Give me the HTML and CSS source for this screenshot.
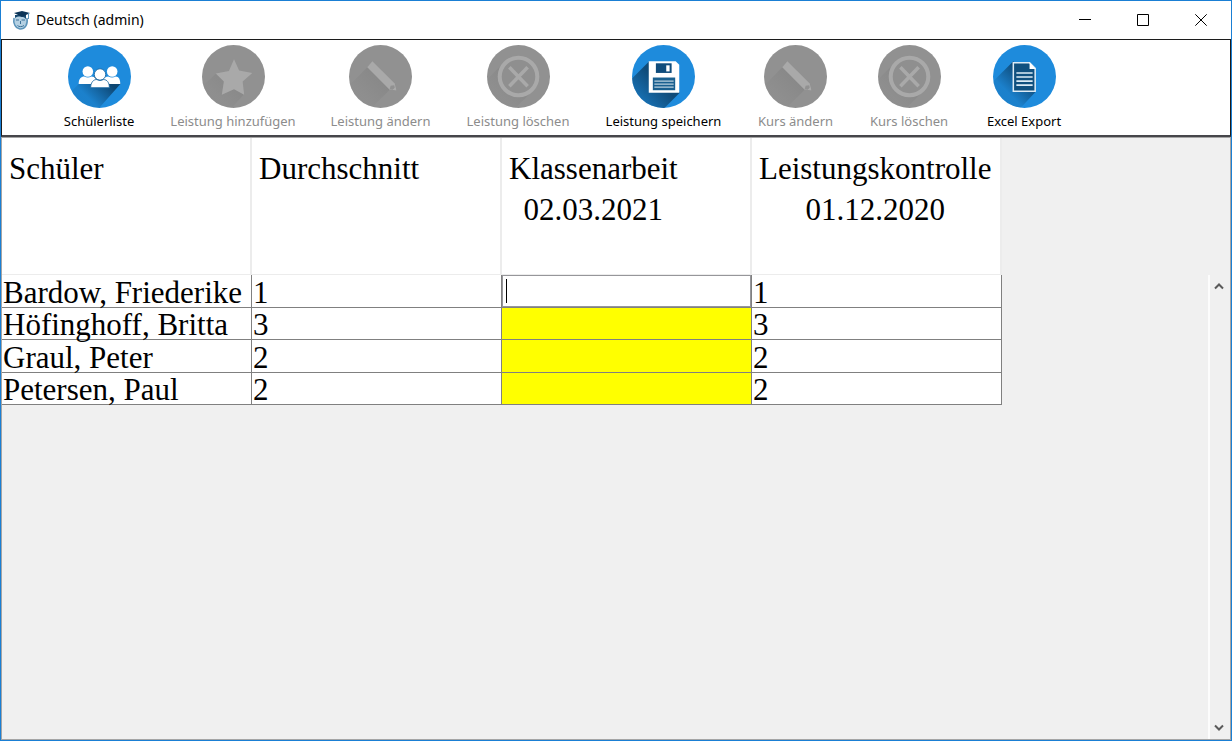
FILE: index.html
```
<!DOCTYPE html>
<html lang="de">
<head>
  <meta charset="UTF-8">
  <meta name="viewport" content="width=device-width, initial-scale=1.0">
  <title>Deutsch (admin)</title>
  <link rel="stylesheet" href="styles.css">
</head>
<body>
  <!-- shared icon parts -->
  <svg class="defs" width="0" height="0" aria-hidden="true">
    <defs>
      <clipPath id="disc"><circle cx="31" cy="31" r="31"/></clipPath>
      <linearGradient id="shade" gradientUnits="userSpaceOnUse" x1="36" y1="32" x2="18" y2="50">
        <stop offset="0" stop-color="#0d4672"/>
        <stop offset="1" stop-color="#0d4672" stop-opacity="0.15"/>
      </linearGradient>
      <linearGradient id="shadeDeep" gradientUnits="userSpaceOnUse" x1="26" y1="36" x2="6" y2="56">
        <stop offset="0" stop-color="#0f4b79"/>
        <stop offset="1" stop-color="#0f4b79" stop-opacity="0.35"/>
      </linearGradient>
      <linearGradient id="shadeGrey" gradientUnits="userSpaceOnUse" x1="40" y1="24" x2="14" y2="50">
        <stop offset="0" stop-color="#858585"/>
        <stop offset="1" stop-color="#858585" stop-opacity="0.2"/>
      </linearGradient>
      <symbol id="pencil" viewBox="0 0 62 62">
        <circle cx="31" cy="31" r="31" fill="#919191"/>
        <path d="M18 22L-12 52L10 74L45 39Z" fill="url(#shadeGrey)" clip-path="url(#disc)"/>
        <path d="M23 16L45 38L46.500 44.500L40 44L18 22Z" fill="#a9a9a9"/>
        <path d="M40 43.500L41 40L44.500 39.500L45 42L43 44Z" fill="#919191"/>
        <path d="M43 44L46 41.500L46.500 44.500Z" fill="#a9a9a9"/>
      </symbol>
      <symbol id="delete" viewBox="0 0 62 62">
        <circle cx="31" cy="31" r="31" fill="#919191"/>
        <path d="M17 17L-14 48L14 76L45 45Z" fill="url(#shadeGrey)" clip-path="url(#disc)"/>
        <circle cx="31" cy="31" r="18.500" fill="#8f8f8f" stroke="#a9a9a9" stroke-width="4"/>
        <path d="M22 22L40 40.500M40 22L22 40.500" stroke="#a9a9a9" stroke-width="3.500" fill="none"/>
      </symbol>
    </defs>
  </svg>

  <div class="window">
    <header class="titlebar">
      <svg class="app-icon" viewBox="0 0 18 20" aria-hidden="true">
        <circle cx="8.500" cy="11.500" r="7" fill="#b4d0e2"/>
        <path d="M2 8C1 13 3 18 8 19C13 19 16 15 15 8" fill="none" stroke="#5b93b9" stroke-width="1.500"/>
        <path d="M4 10H7M9.500 10H13M8.500 11V14M5.500 15.500C7 17 10 17 12 15.500" fill="none" stroke="#3c7198" stroke-width="1"/>
        <path d="M3 5V8C6 6 11 6 14 9V5Z" fill="#16486f"/>
        <path d="M2 3L10 1L18 3L10 7Z" fill="#0d3558"/>
        <path d="M16.500 3V9" stroke="#5b93b9"/>
      </svg>
      <h1>Deutsch (admin)</h1>
      <div class="window-controls">
        <button type="button" aria-label="Minimieren"><svg viewBox="0 0 12 12"><path d="M0 5.500H12"/></svg></button>
        <button type="button" aria-label="Maximieren"><svg viewBox="0 0 12 12"><path d="M.5 .5H11.500V11.500H.5Z"/></svg></button>
        <button type="button" aria-label="Schließen"><svg viewBox="0 0 12 12"><path d="M.3 .3L11.700 11.700M11.700 .3L.3 11.700"/></svg></button>
      </div>
    </header>

    <nav class="toolbar">
      <button type="button" class="tool">
        <svg viewBox="0 0 62 62">
          <circle cx="31" cy="31" r="31" fill="#1e8bdc"/>
          <path d="M11 38L-14 63L20 74L52 38L40 38L28 30Z" fill="url(#shade)" clip-path="url(#disc)"/>
          <g fill="#fff">
            <circle cx="19.500" cy="26" r="5.200"/>
            <circle cx="43.500" cy="26" r="5.200"/>
            <path d="M10.500 38.500C10.500 33 13 31 16 31Q19.500 33 23 31C27 31 28 34 28 38.500Z"/>
            <path d="M34 38.500C34 34 36 31 39.500 31Q43.500 33 47 31C50 31 51.500 34 51.500 38.500Z"/>
            <g stroke="#15649f" stroke-width=".8">
              <circle cx="31.500" cy="29" r="5.600"/>
              <path d="M22.300 42C22.300 37 25 34 28 34Q31.500 36 35 34C38.500 34 40.700 37 40.700 42Z"/>
            </g>
          </g>
        </svg>
        <span>Schülerliste</span>
      </button>
      <button type="button" class="tool" disabled>
        <svg viewBox="0 0 62 62">
          <circle cx="31" cy="31" r="31" fill="#919191"/>
          <path d="M14 28L-12 52L16 76L41 49Z" fill="url(#shadeGrey)" clip-path="url(#disc)"/>
          <path d="M31.500 14L36.500 25L49.500 27.500L40 36L41.500 49L31.500 43.500L19.500 49L21.500 36L13.500 28L26.500 25.500Z" fill="#a9a9a9"/>
        </svg>
        <span>Leistung hinzufügen</span>
      </button>
      <button type="button" class="tool" disabled>
        <svg><use href="#pencil"/></svg>
        <span>Leistung ändern</span>
      </button>
      <button type="button" class="tool" disabled>
        <svg><use href="#delete"/></svg>
        <span>Leistung löschen</span>
      </button>
      <button type="button" class="tool">
        <svg viewBox="0 0 62 62">
          <circle cx="31" cy="31" r="31" fill="#1e8bdc"/>
          <path d="M17 16L-14 47L16 78L47 47Z" fill="url(#shadeDeep)" clip-path="url(#disc)"/>
          <path d="M16.500 16H43L46.500 19.500V47H16.500Z" fill="#fff"/>
          <path d="M23.500 18H39V27.500H23.500Z" fill="#0f4c7c"/>
          <path d="M33.700 20H37V26H33.700Z" fill="#fff"/>
          <path d="M20.500 32H42.500V44.500H20.500Z" fill="#1a608f"/>
          <path d="M22 35.500H41M22 38.500H41M22 41.500H41" stroke="#b9cfde" stroke-width="1.300"/>
        </svg>
        <span>Leistung speichern</span>
      </button>
      <button type="button" class="tool" disabled>
        <svg><use href="#pencil"/></svg>
        <span>Kurs ändern</span>
      </button>
      <button type="button" class="tool" disabled>
        <svg><use href="#delete"/></svg>
        <span>Kurs löschen</span>
      </button>
      <button type="button" class="tool">
        <svg viewBox="0 0 62 62">
          <circle cx="31" cy="31" r="31" fill="#1e8bdc"/>
          <path d="M20 16L-14 50L14 76L42 46Z" fill="url(#shade)" clip-path="url(#disc)"/>
          <path d="M20 17.500H36L41.500 23V45.500H20Z" fill="#10507f" stroke="#dcebf6" stroke-width="1.500"/>
          <path d="M36 17V23.500H42Z" fill="#fff"/>
          <path d="M23 27.500H39M23 31.500H39M23 35.500H39M23 39.500H39" stroke="#dcebf6" stroke-width="1.600"/>
        </svg>
        <span>Excel Export</span>
      </button>
    </nav>

    <main class="content">
      <table class="grades">
        <thead>
          <tr>
            <th scope="col"><span>Schüler</span></th>
            <th scope="col"><span>Durchschnitt</span></th>
            <th scope="col"><span>Klassenarbeit<br>02.03.2021</span></th>
            <th scope="col"><span>Leistungskontrolle<br>01.12.2020</span></th>
          </tr>
        </thead>
        <tbody>
          <tr>
            <td>Bardow, Friederike</td>
            <td>1</td>
            <td class="editing"><input type="text" aria-label="Klassenarbeit 02.03.2021, Bardow, Friederike"></td>
            <td>1</td>
          </tr>
          <tr>
            <td>Höfinghoff, Britta</td>
            <td>3</td>
            <td class="open"></td>
            <td>3</td>
          </tr>
          <tr>
            <td>Graul, Peter</td>
            <td>2</td>
            <td class="open"></td>
            <td>2</td>
          </tr>
          <tr>
            <td>Petersen, Paul</td>
            <td>2</td>
            <td class="open"></td>
            <td>2</td>
          </tr>
        </tbody>
      </table>
      <div class="scrollbar">
        <button type="button" aria-label="Nach oben"><svg viewBox="0 0 10 8"><path d="M1 6.500L5 2.500L9 6.500"/></svg></button>
        <button type="button" aria-label="Nach unten"><svg viewBox="0 0 10 8"><path d="M1 1.500L5 5.500L9 1.500"/></svg></button>
      </div>
    </main>
  </div>
</body>
</html>
```
FILE: styles.css
```
* {
  margin: 0;
  padding: 0;
  box-sizing: border-box;
}

body {
  font-family: "Noto Sans", "Open Sans", sans-serif;
  color: #000;
  background: #f0f0f0;
}

button {
  border: none;
  background: none;
  font: inherit;
}

.defs {
  position: absolute;
}

.window {
  display: flex;
  flex-direction: column;
  min-height: 100vh;
  border: 1px solid #1a7fd4;
}

/* title bar */
.titlebar {
  display: flex;
  align-items: center;
  height: 38px;
  padding: 0 1px 0 11px;
  background: #fff;
}

.app-icon {
  width: 18px;
  height: 20px;
}

h1 {
  margin-left: 6px;
  padding-bottom: 2px;
  font-size: 14px;
  font-weight: 400;
}

.window-controls {
  display: flex;
  margin-left: auto;
}

.window-controls button {
  display: flex;
  align-items: center;
  justify-content: center;
  width: 58px;
  height: 38px;
}

.window-controls svg {
  width: 12px;
  height: 12px;
  fill: none;
  stroke: #000;
}

/* toolbar */
.toolbar {
  display: grid;
  grid-template-columns: 68px 122px 95px 102px 111px 75px 74px 78px;
  column-gap: 39px;
  height: 98px;
  padding: 5px 0 0 63px;
  border: 1px solid #1c1c1c;
  border-bottom: 2px solid #46464a;
  background: #fff;
}

.tool {
  display: flex;
  flex-direction: column;
  align-items: center;
  font-size: 13px;
  line-height: 18px;
  white-space: nowrap;
  color: #000;
}

.tool:disabled {
  color: #8c8c8c;
}

.tool svg {
  flex: none;
  width: 63px;
  height: 63px;
  margin-bottom: 4px;
}

/* grade table */
.content {
  display: flex;
  flex: 1;
  justify-content: space-between;
  border: 1px solid #a5a5a5;
  background: #f0f0f0;
}

.grades {
  align-self: flex-start;
  width: 1000px;
  table-layout: fixed;
  border-collapse: separate;
  border-spacing: 0;
  font-family: "Liberation Serif", serif;
  font-size: 31px;
}

.grades th {
  height: 137px;
  padding: 10px 7px 0;
  border-right: 2px solid #ececec;
  border-bottom: 1px solid #ececec;
  background: #fff;
  font-weight: 400;
  line-height: 41px;
  text-align: left;
  vertical-align: top;
}

.grades th span {
  display: inline-block;
  text-align: center;
}

.grades td {
  height: 32px;
  padding: 2px 1px 0;
  border-right: 1px solid #808080;
  border-bottom: 1px solid #808080;
  background: #fff;
  line-height: 29px;
  white-space: nowrap;
}

.grades tr:nth-child(odd) td {
  height: 33px;
}

.grades .open {
  background: #ff0;
}

.grades .editing {
  padding: 0;
}

.editing input {
  display: block;
  width: 100%;
  height: 32px;
  padding: 0 4px;
  border: 1px solid #96969a;
  outline: none;
  /* text cursor */
  background: linear-gradient(#000, #000) 3px 3px / 1px 24px no-repeat #fff;
  font: inherit;
}

/* scrollbar */
.scrollbar {
  display: flex;
  flex-direction: column;
  justify-content: space-between;
  width: 22px;
  margin-top: 137px;
  padding-right: 2px;
  border-left: 2px solid #fcfcfc;
}

.scrollbar button {
  height: 22px;
  line-height: 0;
}

.scrollbar svg {
  width: 10px;
  height: 8px;
  fill: none;
  stroke: #5a5a5a;
  stroke-width: 2;
}
```
